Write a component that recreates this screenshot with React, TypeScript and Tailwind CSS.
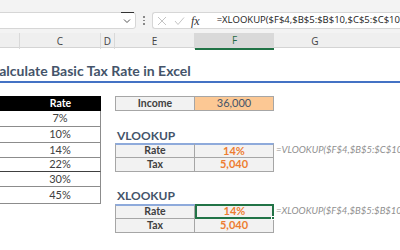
import React from 'react'

const cell = 'flex items-center justify-center whitespace-nowrap'
const label = 'font-["Lato",sans-serif] text-[10.5px] font-bold text-[#404040]'
const orange = 'font-["Lato",sans-serif] text-[11px] font-bold text-[#ed7d31]'
const rateTxt = 'font-["Lato",sans-serif] text-[11px] text-[#404040]'
const note = 'flex items-center pl-[2px] whitespace-nowrap overflow-hidden font-["Lato",sans-serif] text-[9.5px] italic text-[#909090]'
const cols = 'grid grid-cols-[20px_81px_14px_80px_79px_126px]'

const RateRow = ({ h, v, dark }: { h: string; v: string; dark?: boolean }) => (
  <>
    <div className={`${h} border-b ${dark ? 'border-[#404040]' : 'border-[#8c8c8c]'}`} />
    <div
      className={`${h} ${cell} ${rateTxt} border-b border-r border-r-[#8c8c8c] ${
        dark ? 'border-b-[#404040]' : 'border-b-[#8c8c8c]'
      }`}
    >
      {v}
    </div>
  </>
)

export default function App() {
  return (
    <div className="w-[400px] h-[250px] overflow-hidden bg-white relative">
      {/* formula bar */}
      <div className="h-[33px] bg-[#f3f3f3] flex items-start pt-[12px]">
        <div className="relative shrink-0 h-[17px] w-[146px] -ml-[10px] bg-white border border-[#d6d6d6] rounded-[3px] flex items-center justify-end pr-[4px]">
          <div className="absolute top-[-1px] right-[1px] w-[13px] h-[1px] bg-[#333]" />
          <svg width="8" height="6" viewBox="0 0 8 6">
            <path d="M1 1.5 L4 4.5 L7 1.5" fill="none" stroke="#555" strokeWidth="1" />
          </svg>
        </div>
        <div className="shrink-0 w-[16px] h-[17px] flex flex-col items-center justify-center gap-[2px]">
          <div className="w-[1.5px] h-[1.5px] bg-[#888]" />
          <div className="w-[1.5px] h-[1.5px] bg-[#888]" />
          <div className="w-[1.5px] h-[1.5px] bg-[#888]" />
        </div>
        <div className="flex-1 min-w-0 overflow-hidden h-[17px] bg-white border border-[#d6d6d6] border-r-0 rounded-l-[3px] flex items-center pl-[4px]">
          <svg width="10" height="10" viewBox="0 0 10 10" className="shrink-0">
            <path d="M1 1 L9 9 M9 1 L1 9" stroke="#c4c4c4" strokeWidth="1" fill="none" />
          </svg>
          <svg width="11" height="10" viewBox="0 0 11 10" className="shrink-0 ml-[7px]">
            <path d="M1 5 L4 8.5 L10 1.5" stroke="#c4c4c4" strokeWidth="1" fill="none" />
          </svg>
          <span className="shrink-0 ml-[6px] font-['Liberation_Serif',serif] italic text-[12px] text-[#333]">fx</span>
          <span className="shrink-0 ml-[17px] whitespace-nowrap font-['Open_Sans',sans-serif] text-[9.5px] text-[#222]">
            =XLOOKUP($F$4,$B$5:$B$10,$C$5:$C$10,,-1)
          </span>
        </div>
      </div>

      {/* column headers */}
      <div className="grid grid-cols-[20px_81px_14px_80px_79px_82px_44px] h-[15px] bg-[#efefef] border-b border-[#d4d4d4] font-['Open_Sans',sans-serif] text-[10px] text-[#444]">
        <div className="border-r border-[#d9d9d9]" />
        <div className={`${cell} border-r border-[#d9d9d9]`}>C</div>
        <div className={`${cell} border-r border-[#d9d9d9]`}>D</div>
        <div className={`${cell} border-r border-[#d9d9d9]`}>E</div>
        <div className={`${cell} bg-[#d9d9d9] text-[#1e6b41] border-b-2 border-[#217346] -mb-[1px]`}>F</div>
        <div className={cell}>G</div>
        <div />
      </div>

      {/* title */}
      <div className="h-[35px] flex items-end pb-[2px] border-b-2 border-[#4472c4]">
        <span className="-ml-[10px] whitespace-nowrap font-['Lato',sans-serif] font-bold text-[14px] leading-[16px] text-[#44546a]">
          Calculate Basic Tax Rate in Excel
        </span>
      </div>

      <div className={cols}>
        {/* row 3 */}
        <div className="h-[13px] col-span-6" />

        {/* row 4 */}
        <div className="h-[15px] bg-black" />
        <div className={`h-[15px] ${cell} bg-black text-white font-["Lato",sans-serif] text-[10.5px] font-bold`}>Rate</div>
        <div />
        <div className={`h-[15px] ${cell} ${label} bg-[#f2f2f2] border border-[#a6a6a6]`}>Income</div>
        <div className={`h-[15px] ${cell} bg-[#fcc894] border border-l-0 border-[#a6a6a6] font-["Lato",sans-serif] text-[11px] text-[#44546a]`}>
          36,000
        </div>
        <div />

        {/* row 5 */}
        <RateRow h="h-[16px]" v="7%" />
        <div className="col-span-4" />

        {/* row 6 */}
        <RateRow h="h-[16px]" v="10%" />
        <div />
        <div className="h-[16px] flex items-end pl-[2px] font-['Lato',sans-serif] font-bold text-[12px] text-[#44546a] whitespace-nowrap leading-[15px]">
          VLOOKUP
        </div>
        <div className="col-span-2" />

        {/* row 7 */}
        <RateRow h="h-[15px]" v="14%" />
        <div />
        <div className={`h-[15px] ${cell} ${label} bg-[#f2f2f2] border-t-2 border-t-[#8eaadb] border-l border-r border-b border-[#a6a6a6]`}>
          Rate
        </div>
        <div className={`h-[15px] ${cell} ${orange} bg-[#f2f2f2] border-t-2 border-t-[#8eaadb] border-r border-b border-[#a6a6a6]`}>
          14%
        </div>
        <div className={`h-[15px] ${note}`}>=VLOOKUP($F$4,$B$5:$C$10,2,TRUE)</div>

        {/* row 8 */}
        <RateRow h="h-[14px]" v="22%" dark />
        <div />
        <div className={`h-[14px] ${cell} ${label} bg-[#f2f2f2] border-l border-r border-b border-[#a6a6a6]`}>Tax</div>
        <div className={`h-[14px] ${cell} ${orange} bg-[#f2f2f2] border-r border-b border-[#a6a6a6]`}>5,040</div>
        <div />

        {/* row 9 */}
        <RateRow h="h-[15px]" v="30%" />
        <div className="col-span-4" />

        {/* row 10 */}
        <RateRow h="h-[17px]" v="45%" />
        <div />
        <div className="h-[17px] flex items-center pl-[2px] font-['Lato',sans-serif] font-bold text-[12px] text-[#44546a] whitespace-nowrap">
          XLOOKUP
        </div>
        <div className="col-span-2" />

        {/* row 11 */}
        <div className="col-span-3" />
        <div className={`h-[15px] ${cell} ${label} bg-[#f2f2f2] border-t-2 border-t-[#8eaadb] border-l border-r border-b border-[#a6a6a6]`}>
          Rate
        </div>
        <div className={`relative h-[15px] ${cell} ${orange} bg-[#f2f2f2] border-2 border-[#217346]`}>
          14%
          <div className="absolute -right-[3px] -bottom-[3px] w-[4px] h-[4px] bg-[#217346] border border-white" />
        </div>
        <div className={`h-[15px] ${note}`}>=XLOOKUP($F$4,$B$5:$B$10,$C$5:$C$10,,-1)</div>

        {/* row 12 */}
        <div className="col-span-3" />
        <div className={`h-[14px] ${cell} ${label} bg-[#f2f2f2] border-l border-r border-b border-[#a6a6a6]`}>Tax</div>
        <div className={`h-[14px] ${cell} ${orange} bg-[#f2f2f2] border-r border-b border-[#a6a6a6]`}>5,040</div>
        <div />
      </div>
    </div>
  )
}
